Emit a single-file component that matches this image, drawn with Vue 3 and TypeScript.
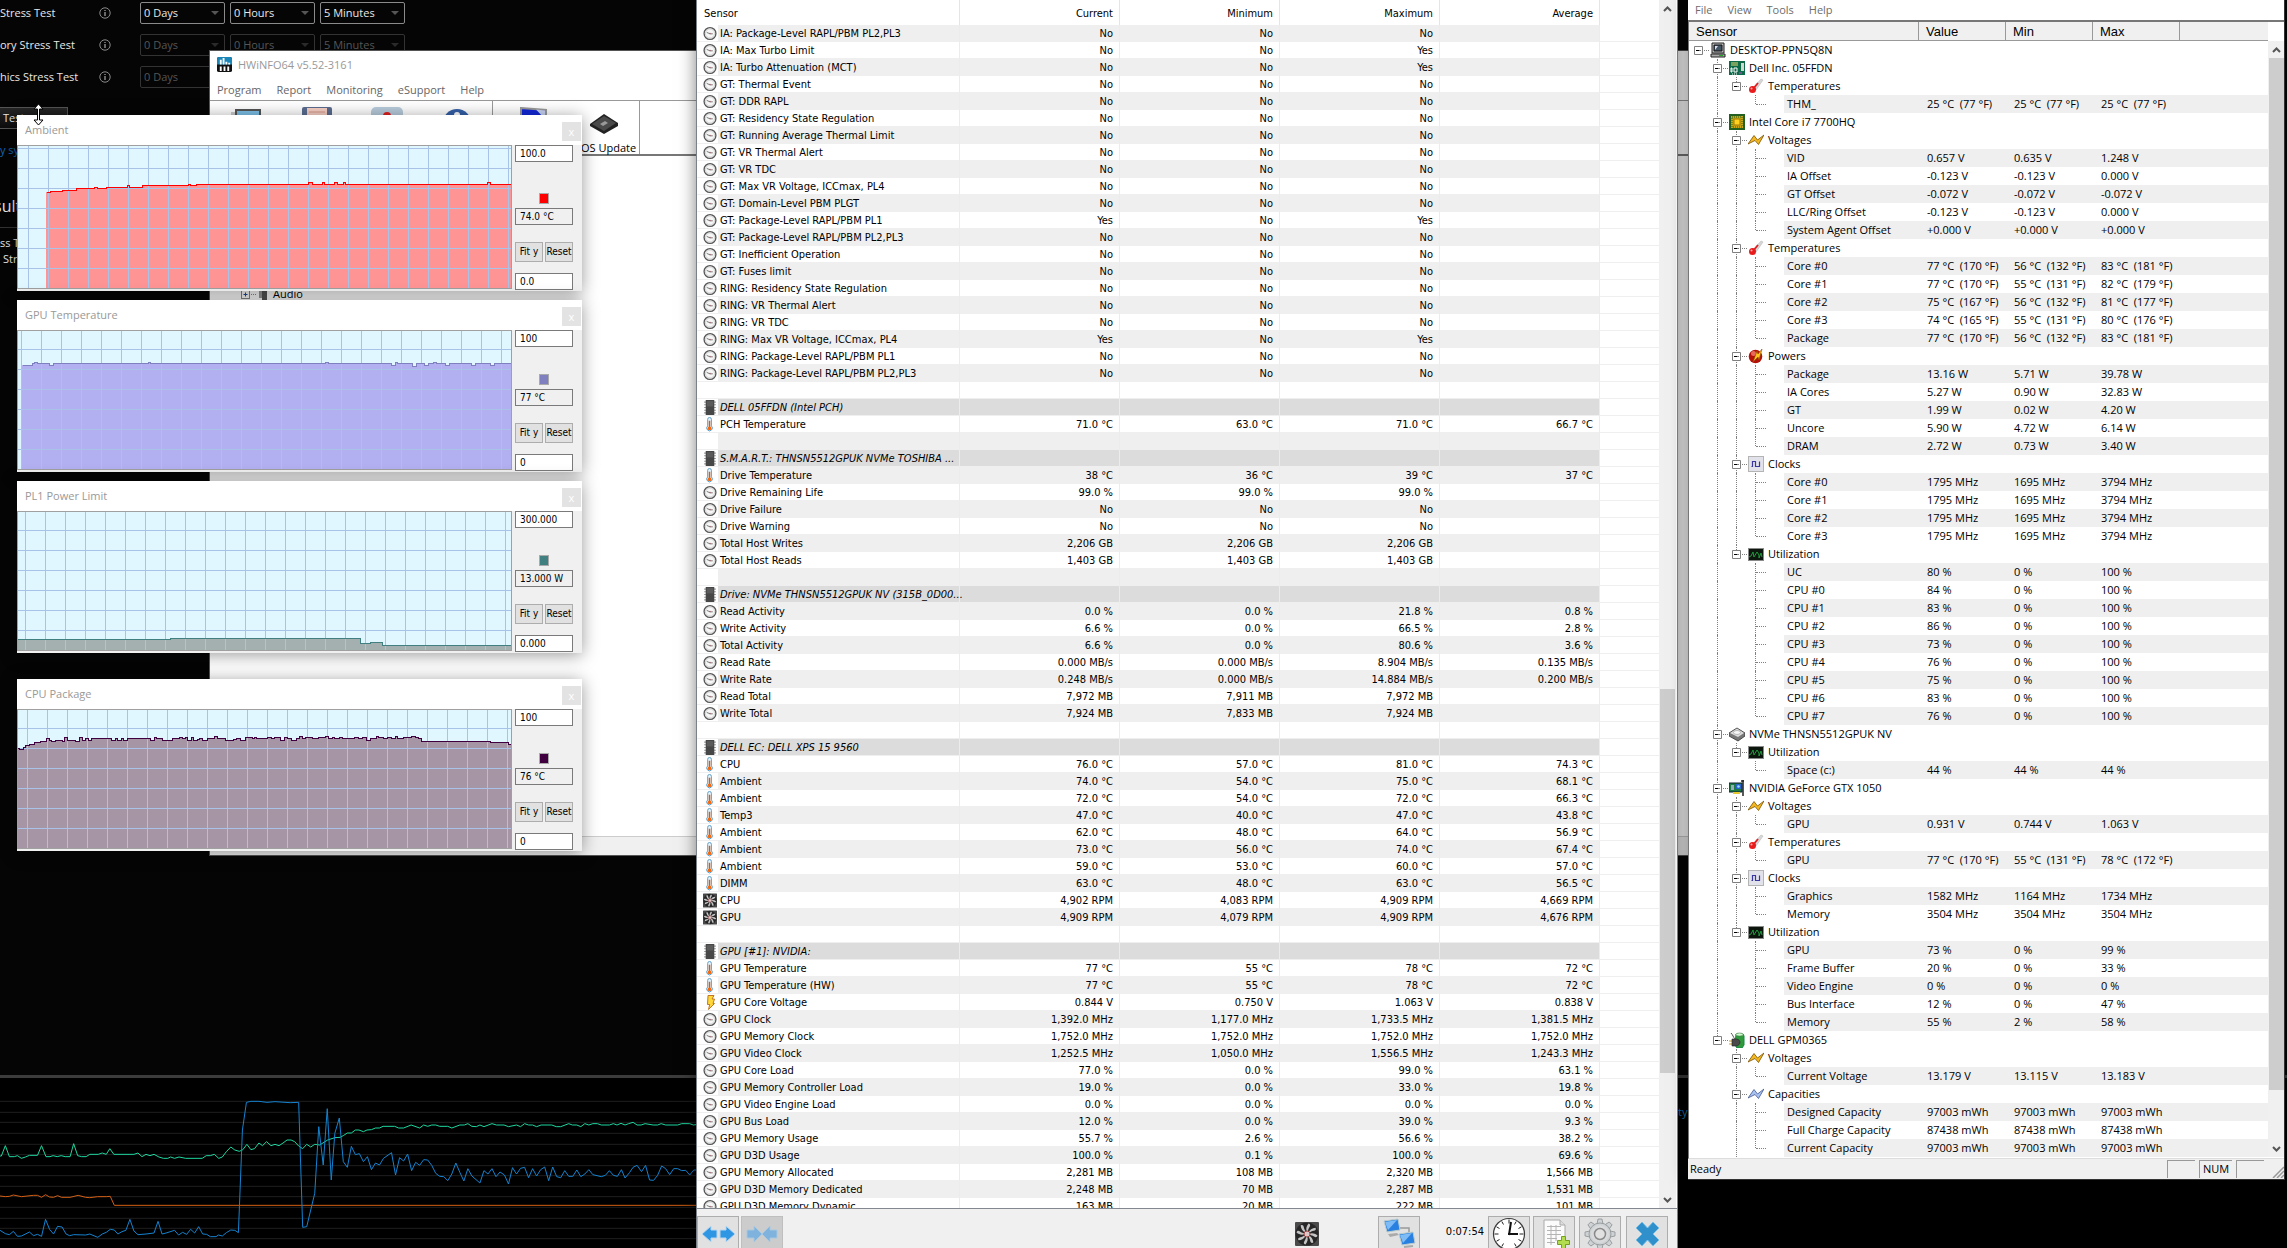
<script setup lang="ts">
type Cells = [string, string, string, string]
interface SensorRow { kind: string; name: string; cells: Cells }

const s = (kind: string, name: string, a = '', b = '', c = '', d = ''): SensorRow => ({ kind, name, cells: [a, b, c, d] })
const blank = (): SensorRow => s('blank', '')

const sensorRows: SensorRow[] = [
  s('clock', 'IA: Package-Level RAPL/PBM PL2,PL3', 'No', 'No', 'No'),
  s('clock', 'IA: Max Turbo Limit', 'No', 'No', 'Yes'),
  s('clock', 'IA: Turbo Attenuation (MCT)', 'No', 'No', 'Yes'),
  s('clock', 'GT: Thermal Event', 'No', 'No', 'No'),
  s('clock', 'GT: DDR RAPL', 'No', 'No', 'No'),
  s('clock', 'GT: Residency State Regulation', 'No', 'No', 'No'),
  s('clock', 'GT: Running Average Thermal Limit', 'No', 'No', 'No'),
  s('clock', 'GT: VR Thermal Alert', 'No', 'No', 'No'),
  s('clock', 'GT: VR TDC', 'No', 'No', 'No'),
  s('clock', 'GT: Max VR Voltage, ICCmax, PL4', 'No', 'No', 'No'),
  s('clock', 'GT: Domain-Level PBM PLGT', 'No', 'No', 'No'),
  s('clock', 'GT: Package-Level RAPL/PBM PL1', 'Yes', 'No', 'Yes'),
  s('clock', 'GT: Package-Level RAPL/PBM PL2,PL3', 'No', 'No', 'No'),
  s('clock', 'GT: Inefficient Operation', 'No', 'No', 'No'),
  s('clock', 'GT: Fuses limit', 'No', 'No', 'No'),
  s('clock', 'RING: Residency State Regulation', 'No', 'No', 'No'),
  s('clock', 'RING: VR Thermal Alert', 'No', 'No', 'No'),
  s('clock', 'RING: VR TDC', 'No', 'No', 'No'),
  s('clock', 'RING: Max VR Voltage, ICCmax, PL4', 'Yes', 'No', 'Yes'),
  s('clock', 'RING: Package-Level RAPL/PBM PL1', 'No', 'No', 'No'),
  s('clock', 'RING: Package-Level RAPL/PBM PL2,PL3', 'No', 'No', 'No'),
  blank(),
  s('chip', 'DELL 05FFDN (Intel PCH)'),
  s('therm', 'PCH Temperature', '71.0 °C', '63.0 °C', '71.0 °C', '66.7 °C'),
  blank(),
  s('chip', 'S.M.A.R.T.: THNSN5512GPUK NVMe TOSHIBA ...'),
  s('therm', 'Drive Temperature', '38 °C', '36 °C', '39 °C', '37 °C'),
  s('clock', 'Drive Remaining Life', '99.0 %', '99.0 %', '99.0 %'),
  s('clock', 'Drive Failure', 'No', 'No', 'No'),
  s('clock', 'Drive Warning', 'No', 'No', 'No'),
  s('clock', 'Total Host Writes', '2,206 GB', '2,206 GB', '2,206 GB'),
  s('clock', 'Total Host Reads', '1,403 GB', '1,403 GB', '1,403 GB'),
  blank(),
  s('chip', 'Drive: NVMe THNSN5512GPUK NV (315B_0D00...'),
  s('clock', 'Read Activity', '0.0 %', '0.0 %', '21.8 %', '0.8 %'),
  s('clock', 'Write Activity', '6.6 %', '0.0 %', '66.5 %', '2.8 %'),
  s('clock', 'Total Activity', '6.6 %', '0.0 %', '80.6 %', '3.6 %'),
  s('clock', 'Read Rate', '0.000 MB/s', '0.000 MB/s', '8.904 MB/s', '0.135 MB/s'),
  s('clock', 'Write Rate', '0.248 MB/s', '0.000 MB/s', '14.884 MB/s', '0.200 MB/s'),
  s('clock', 'Read Total', '7,972 MB', '7,911 MB', '7,972 MB'),
  s('clock', 'Write Total', '7,924 MB', '7,833 MB', '7,924 MB'),
  blank(),
  s('chip', 'DELL EC: DELL XPS 15 9560'),
  s('therm', 'CPU', '76.0 °C', '57.0 °C', '81.0 °C', '74.3 °C'),
  s('therm', 'Ambient', '74.0 °C', '54.0 °C', '75.0 °C', '68.1 °C'),
  s('therm', 'Ambient', '72.0 °C', '54.0 °C', '72.0 °C', '66.3 °C'),
  s('therm', 'Temp3', '47.0 °C', '40.0 °C', '47.0 °C', '43.8 °C'),
  s('therm', 'Ambient', '62.0 °C', '48.0 °C', '64.0 °C', '56.9 °C'),
  s('therm', 'Ambient', '73.0 °C', '56.0 °C', '74.0 °C', '67.4 °C'),
  s('therm', 'Ambient', '59.0 °C', '53.0 °C', '60.0 °C', '57.0 °C'),
  s('therm', 'DIMM', '63.0 °C', '48.0 °C', '63.0 °C', '56.5 °C'),
  s('fan', 'CPU', '4,902 RPM', '4,083 RPM', '4,909 RPM', '4,669 RPM'),
  s('fan', 'GPU', '4,909 RPM', '4,079 RPM', '4,909 RPM', '4,676 RPM'),
  blank(),
  s('chip', 'GPU [#1]: NVIDIA:'),
  s('therm', 'GPU Temperature', '77 °C', '55 °C', '78 °C', '72 °C'),
  s('therm', 'GPU Temperature (HW)', '77 °C', '55 °C', '78 °C', '72 °C'),
  s('bolt', 'GPU Core Voltage', '0.844 V', '0.750 V', '1.063 V', '0.838 V'),
  s('clock', 'GPU Clock', '1,392.0 MHz', '1,177.0 MHz', '1,733.5 MHz', '1,381.5 MHz'),
  s('clock', 'GPU Memory Clock', '1,752.0 MHz', '1,752.0 MHz', '1,752.0 MHz', '1,752.0 MHz'),
  s('clock', 'GPU Video Clock', '1,252.5 MHz', '1,050.0 MHz', '1,556.5 MHz', '1,243.3 MHz'),
  s('clock', 'GPU Core Load', '77.0 %', '0.0 %', '99.0 %', '63.1 %'),
  s('clock', 'GPU Memory Controller Load', '19.0 %', '0.0 %', '33.0 %', '19.8 %'),
  s('clock', 'GPU Video Engine Load', '0.0 %', '0.0 %', '0.0 %', '0.0 %'),
  s('clock', 'GPU Bus Load', '12.0 %', '0.0 %', '39.0 %', '9.3 %'),
  s('clock', 'GPU Memory Usage', '55.7 %', '2.6 %', '56.6 %', '38.2 %'),
  s('clock', 'GPU D3D Usage', '100.0 %', '0.1 %', '100.0 %', '69.6 %'),
  s('clock', 'GPU Memory Allocated', '2,281 MB', '108 MB', '2,320 MB', '1,566 MB'),
  s('clock', 'GPU D3D Memory Dedicated', '2,248 MB', '70 MB', '2,287 MB', '1,531 MB'),
  s('clock', 'GPU D3D Memory Dynamic', '163 MB', '20 MB', '222 MB', '101 MB'),
]

type Leaf = [string, string, string, string]
interface Section { name: string; icon: string; leaves: Leaf[] }
interface Device { name: string; icon: string; open?: boolean; sections: Section[] }

const devices: Device[] = [
  { name: 'Dell Inc. 05FFDN', icon: 'board', sections: [
    { name: 'Temperatures', icon: 'temps', leaves: [['THM_', '25 °C  (77 °F)', '25 °C  (77 °F)', '25 °C  (77 °F)']] },
  ] },
  { name: 'Intel Core i7 7700HQ', icon: 'cpu', sections: [
    { name: 'Voltages', icon: 'volts', leaves: [
      ['VID', '0.657 V', '0.635 V', '1.248 V'],
      ['IA Offset', '-0.123 V', '-0.123 V', '0.000 V'],
      ['GT Offset', '-0.072 V', '-0.072 V', '-0.072 V'],
      ['LLC/Ring Offset', '-0.123 V', '-0.123 V', '0.000 V'],
      ['System Agent Offset', '+0.000 V', '+0.000 V', '+0.000 V'],
    ] },
    { name: 'Temperatures', icon: 'temps', leaves: [
      ['Core #0', '77 °C  (170 °F)', '56 °C  (132 °F)', '83 °C  (181 °F)'],
      ['Core #1', '77 °C  (170 °F)', '55 °C  (131 °F)', '82 °C  (179 °F)'],
      ['Core #2', '75 °C  (167 °F)', '56 °C  (132 °F)', '81 °C  (177 °F)'],
      ['Core #3', '74 °C  (165 °F)', '55 °C  (131 °F)', '80 °C  (176 °F)'],
      ['Package', '77 °C  (170 °F)', '56 °C  (132 °F)', '83 °C  (181 °F)'],
    ] },
    { name: 'Powers', icon: 'power', leaves: [
      ['Package', '13.16 W', '5.71 W', '39.78 W'],
      ['IA Cores', '5.27 W', '0.90 W', '32.83 W'],
      ['GT', '1.99 W', '0.02 W', '4.20 W'],
      ['Uncore', '5.90 W', '4.72 W', '6.14 W'],
      ['DRAM', '2.72 W', '0.73 W', '3.40 W'],
    ] },
    { name: 'Clocks', icon: 'wave', leaves: [
      ['Core #0', '1795 MHz', '1695 MHz', '3794 MHz'],
      ['Core #1', '1795 MHz', '1695 MHz', '3794 MHz'],
      ['Core #2', '1795 MHz', '1695 MHz', '3794 MHz'],
      ['Core #3', '1795 MHz', '1695 MHz', '3794 MHz'],
    ] },
    { name: 'Utilization', icon: 'util', leaves: [
      ['UC', '80 %', '0 %', '100 %'],
      ['CPU #0', '84 %', '0 %', '100 %'],
      ['CPU #1', '83 %', '0 %', '100 %'],
      ['CPU #2', '86 %', '0 %', '100 %'],
      ['CPU #3', '73 %', '0 %', '100 %'],
      ['CPU #4', '76 %', '0 %', '100 %'],
      ['CPU #5', '75 %', '0 %', '100 %'],
      ['CPU #6', '83 %', '0 %', '100 %'],
      ['CPU #7', '76 %', '0 %', '100 %'],
    ] },
  ] },
  { name: 'NVMe THNSN5512GPUK NV', icon: 'disk', sections: [
    { name: 'Utilization', icon: 'util', leaves: [['Space (c:)', '44 %', '44 %', '44 %']] },
  ] },
  { name: 'NVIDIA GeForce GTX 1050', icon: 'card', sections: [
    { name: 'Voltages', icon: 'volts', leaves: [['GPU', '0.931 V', '0.744 V', '1.063 V']] },
    { name: 'Temperatures', icon: 'temps', leaves: [['GPU', '77 °C  (170 °F)', '55 °C  (131 °F)', '78 °C  (172 °F)']] },
    { name: 'Clocks', icon: 'wave', leaves: [
      ['Graphics', '1582 MHz', '1164 MHz', '1734 MHz'],
      ['Memory', '3504 MHz', '3504 MHz', '3504 MHz'],
    ] },
    { name: 'Utilization', icon: 'util', leaves: [
      ['GPU', '73 %', '0 %', '99 %'],
      ['Frame Buffer', '20 %', '0 %', '33 %'],
      ['Video Engine', '0 %', '0 %', '0 %'],
      ['Bus Interface', '12 %', '0 %', '47 %'],
      ['Memory', '55 %', '2 %', '58 %'],
    ] },
  ] },
  { name: 'DELL GPM0365', icon: 'battery', open: true, sections: [
    { name: 'Voltages', icon: 'volts', leaves: [['Current Voltage', '13.179 V', '13.115 V', '13.183 V']] },
    { name: 'Capacities', icon: 'caps', leaves: [
      ['Designed Capacity', '97003 mWh', '97003 mWh', '97003 mWh'],
      ['Full Charge Capacity', '87438 mWh', '87438 mWh', '87438 mWh'],
      ['Current Capacity', '97003 mWh', '97003 mWh', '97003 mWh'],
    ] },
  ] },
]

// Each guide is one 19px slot in front of a tree label.
interface TreeRow { guides: string[]; icon: string; name: string; values: string[]; band: boolean }
const treeRows: TreeRow[] = [{ guides: ['box'], icon: 'pc', name: 'DESKTOP-PPN5Q8N', values: ['', '', ''], band: false }]
devices.forEach((d, di) => {
  const lastD = di === devices.length - 1
  treeRows.push({ guides: ['', lastD ? 'box up' : 'box up down'], icon: d.icon, name: d.name, values: ['', '', ''], band: false })
  d.sections.forEach((sec, si) => {
    const lastS = si === d.sections.length - 1 && !d.open
    const g1 = lastD ? '' : 'up down'
    treeRows.push({ guides: ['', g1, lastS ? 'box up' : 'box up down'], icon: sec.icon, name: sec.name, values: ['', '', ''], band: false })
    sec.leaves.forEach((l, li) => {
      const lastL = li === sec.leaves.length - 1
      treeRows.push({
        guides: ['', g1, lastS ? '' : 'up down', lastL ? 'arm up' : 'arm up down', ''],
        icon: '', name: l[0], values: [l[1], l[2], l[3]], band: li % 2 === 0,
      })
    })
  })
})

interface Graph {
  id: string; title: string; top: string; bottom: string; value: string
  height: number; gx: number; gy: number; line: string; fill: string; steps: [number, number][]
}
const graphs: Graph[] = [
  { id: 'ambient', title: 'Ambient', top: '100.0', bottom: '0.0', value: '74.0 °C', height: 144, gx: 11, gy: 3, line: '#ff0000', fill: '#ff9494',
    steps: [[29, 47], [33, 46], [45, 45], [59, 43], [77, 42], [80, 43], [89, 42], [110, 40], [112, 42], [125, 40], [171, 39], [173, 40], [179, 39], [291, 37], [295, 39], [305, 37], [307, 39], [317, 37], [320, 39], [326, 37], [328, 39], [470, 37], [473, 39]] },
  { id: 'gputemp', title: 'GPU Temperature', top: '100', bottom: '0', value: '77 °C', height: 140, gx: 4, gy: 19, line: '#8080c0', fill: '#b2b0f0',
    steps: [[5, 35], [15, 33], [17, 32], [20, 33], [32, 35], [36, 33], [131, 32], [133, 33], [308, 32], [311, 33], [374, 35], [378, 32], [380, 33], [395, 36], [399, 33], [407, 35], [411, 33], [416, 32], [419, 33], [428, 35], [432, 33], [454, 35], [458, 33], [473, 35], [477, 33]] },
  { id: 'pl1', title: 'PL1 Power Limit', top: '300.000', bottom: '0.000', value: '13.000 W', height: 140, gx: 8, gy: 19, line: '#408080', fill: '#a3b0af',
    steps: [[0, 128], [153, 127], [343, 132], [353, 131], [365, 134]] },
  { id: 'package', title: 'CPU Package', top: '100', bottom: '0', value: '76 °C', height: 140, gx: 10, gy: 19, line: '#400040', fill: '#a595a5',
    steps: [[0, 39], [2, 40], [6, 38], [8, 36], [12, 35], [17, 33], [23, 32], [29, 29], [32, 31], [34, 32], [38, 31], [45, 32], [47, 28], [50, 31], [58, 32], [62, 28], [65, 31], [68, 29], [71, 31], [74, 29], [94, 31], [98, 29], [100, 31], [104, 29], [106, 31], [110, 29], [133, 31], [137, 28], [139, 29], [145, 31], [155, 29], [162, 28], [165, 29], [168, 28], [170, 31], [174, 28], [176, 31], [180, 30], [182, 29], [185, 31], [190, 29], [197, 27], [200, 29], [208, 31], [216, 30], [219, 29], [223, 31], [228, 28], [235, 29], [237, 28], [239, 29], [250, 28], [254, 29], [257, 28], [263, 31], [267, 28], [270, 29], [274, 31], [279, 29], [282, 27], [285, 29], [288, 28], [295, 29], [301, 28], [308, 27], [311, 29], [315, 28], [317, 29], [322, 28], [325, 29], [337, 28], [341, 29], [345, 28], [349, 31], [353, 29], [359, 27], [361, 28], [366, 29], [370, 28], [374, 29], [378, 27], [380, 29], [386, 28], [394, 27], [398, 28], [401, 29], [404, 32], [473, 33], [491, 35]] },
]
const stepPath = (g: Graph) => {
  let d = `M${g.steps[0][0]} ${g.steps[0][1]}`
  for (let i = 1; i < g.steps.length; i++) d += `H${g.steps[i][0]}V${g.steps[i][1]}`
  return d + 'H495'
}
const areaPath = (g: Graph) => `${stepPath(g)}V${g.height}H${g.steps[0][0]}Z`
const ticks = (start: number, end: number) => {
  const out: number[] = []
  for (let v = start; v < end; v += 20) out.push(v)
  return out
}

const chartLines = [154, 187, 217, 250, 283, 314, 347, 377, 409, 440, 472, 505, 535, 566]
const greenLine = '0,318 3,318 12,287 21,320 32,320 39,317 48,325 57,321 66,316 84,316 93,287 103,320 112,320 119,317 128,320 137,317 146,320 157,320 165,281 174,317 183,320 193,320 201,313 220,313 229,309 238,313 246,296 255,313 300,313 309,309 318,320 327,313 336,317 345,313 356,321 366,325 376,325 382,321 391,325 401,321 416,325 453,325 462,317 471,317 480,313 490,325 498,321 507,305 517,291 526,300 536,304 544,299 553,283 562,299 570,296 580,279 588,287 597,275 607,287 616,283 625,287 634,279 643,270 652,270 660,275 669,288 678,296 687,283 696,291 705,283 716,285 734,270 750,263 762,262 770,256 778,249 787,249 796,240 804,240 814,245 822,240 832,239 841,234 850,234 858,229 884,229 893,234 904,234 921,225 940,234 949,225 958,229 967,225 976,225 985,229 1003,229 1012,234 1030,225 1040,225 1048,221 1057,229 1067,230 1075,225 1084,230 1102,221 1112,225 1129,225 1139,230 1157,225 1166,230 1175,221 1184,225 1193,225 1202,230 1212,225 1236,225 1246,230 1256,230 1274,221 1282,225 1292,225 1301,230 1310,221 1319,225 1328,221 1338,221 1347,225 1365,225 1374,221 1382,225 1391,220 1400,225 1408,221 1418,217 1427,225 1436,225 1445,221 1463,225 1473,225 1481,221 1491,225 1518,225 1527,221 1545,221 1553,225 1559,224'
const blueLine = '0,541 12,551 21,554 30,544 39,559 48,558 66,546 75,557 84,553 93,559 102,508 111,538 120,552 129,529 139,531 148,552 156,557 165,554 192,555 201,552 219,562 229,552 238,547 247,538 256,540 264,552 273,545 282,541 291,508 300,543 309,554 327,552 345,549 354,514 363,552 372,549 391,541 400,555 409,547 418,553 427,538 436,549 445,530 454,552 463,553 471,560 484,560 489,555 498,558 507,548 517,540 526,541 534,548 543,240 552,157 562,154 580,154 598,157 616,155 650,158 669,157 678,532 687,530 705,430 714,230 724,345 733,176 742,390 750,250 760,204 769,335 778,352 787,289 796,314 805,311 814,335 823,320 832,359 841,339 850,345 859,325 877,308 886,375 895,323 904,333 913,312 922,362 931,337 940,346 949,329 958,330 967,346 976,370 985,379 994,380 1003,392 1012,372 1021,339 1030,367 1039,393 1048,356 1057,378 1075,399 1084,362 1093,372 1102,356 1111,380 1120,366 1130,375 1139,402 1148,353 1157,372 1166,355 1175,352 1184,383 1193,356 1202,378 1211,359 1220,351 1229,392 1238,351 1247,380 1256,383 1265,362 1274,379 1283,379 1292,360 1301,380 1310,372 1319,359 1328,374 1347,380 1356,376 1365,362 1374,376 1383,379 1392,359 1400,384 1410,368 1418,352 1427,346 1437,365 1446,346 1455,390 1464,391 1473,376 1482,348 1491,356 1500,374 1509,356 1518,356 1527,362 1536,361 1545,375 1554,360 1559,360'
const orangeLine = '0,438 12,440 21,439 30,435 48,440 75,436 84,436 93,442 102,434 111,441 120,442 129,437 138,442 157,442 175,436 192,442 201,443 219,440 238,440 247,439 256,466 1559,466'

const durations = ['0 Days', '0 Hours', '5 Minutes']
const tests = [
  { label: 'Stress Test', off: false },
  { label: 'ory Stress Test', off: true },
  { label: 'hics Stress Test', off: true },
]
const blades = [0, 45, 90, 135, 180, 225, 270, 315]
</script>

<template>
  <svg class="defs" aria-hidden="true">
    <symbol id="i-clock" viewBox="0 0 13 13"><circle cx="6.5" cy="6.5" r="5.5" fill="#f7f7f7" stroke="#555" stroke-width="1.2" /><circle cx="6.5" cy="6.5" r="4.2" fill="none" stroke="#ccc" stroke-width=".8" /><path d="M3.5 5.500l3 1.300h2.600" stroke="#666" stroke-width=".8" fill="none" /><circle cx="6.5" cy="6.6" r=".7" fill="#a66" /></symbol>
    <symbol id="i-therm" viewBox="0 0 13 16"><path d="M4 2.5a2 2 0 014 0v7a3 3 0 11-4 0z" fill="#e6f3fb" stroke="#5a9bc4" /><path d="M6 4v7" stroke="#d85a10" stroke-width="1.6" /><circle cx="6" cy="12" r="2" fill="#f26a12" /></symbol>
    <symbol id="i-chip" viewBox="0 0 13 14"><path d="M1 2h11M1 4.5h11M1 7h11M1 9.500h11M1 12h11" stroke="#999" /><rect x="2.500" y="0" width="8" height="14" fill="#474747" /><path d="M3.500 1h6v5h-6z" fill="#5b5b5b" /></symbol>
    <symbol id="i-fan" viewBox="0 0 24 24"><rect width="24" height="24" rx="1" fill="#4a4a4a" /><circle cx="12" cy="12" r="11.500" fill="#262626" /><path v-for="b in blades" :key="b" d="M12 10C10.500 7 11.500 4 13.500 1.500c2 .5 2 2 1 3.500C13.500 6.500 13 8 13 10z" fill="#c4c4c4" :transform="`rotate(${b} 12 12)`" /><circle cx="12" cy="12" r="3" fill="#dcc8c8" stroke="#944" /></symbol>
    <symbol id="i-bolt" viewBox="0 0 13 15"><path d="M4.500.500h6L8.500 4H11L9.500 8.500h1.500L5 14.500l1.200-5H4z" fill="#ffd83a" stroke="#b86a1a" stroke-width=".9" /></symbol>

    <symbol id="i-pc" viewBox="0 0 16 16"><path d="M2 1h12v10H2z" fill="#bbb" stroke="#222" /><path d="M4 3h8v6H4z" fill="#456" stroke="#111" /><path d="M5 4l3 0-3 4z" fill="#dde" /><path d="M1 12h14v3H1z" fill="#aaa" stroke="#222" /><path d="M9 13.500h4" stroke="#2a2" /></symbol>
    <symbol id="i-board" viewBox="0 0 16 16"><rect y="1" width="16" height="14" fill="#0d6b4a" /><path d="M2 3h7M2 5h7" stroke="#e8d870" /><path d="M2 8h1v4H2zM5 8h3v4H5z" fill="none" stroke="#fff" /><path d="M12 3h3v8h-3z" fill="#cfd8d0" /><path d="M3 14h6" stroke="#fff" stroke-dasharray="1 1" /><path d="M10 13h3" stroke="#c4c" /></symbol>
    <symbol id="i-cpu" viewBox="0 0 16 16"><rect x="1" y="1" width="14" height="14" fill="#cda70f" stroke="#24601f" stroke-width="2" /><rect x="3" y="3" width="10" height="10" fill="none" stroke="#24601f" stroke-dasharray="1 1" /><rect x="5" y="5" width="6" height="6" fill="#ffd21e" stroke="#a07808" /></symbol>
    <symbol id="i-disk" viewBox="0 0 16 16"><path d="M0 7l8-5 8 5v3l-7 5-9-5z" fill="#777" stroke="#333" stroke-width=".8" /><path d="M1 7l7-4.500L15 7l-6 4z" fill="#ddd" /><ellipse cx="8" cy="6.500" rx="3.500" ry="2" fill="#f6f6f6" stroke="#999" stroke-width=".6" /></symbol>
    <symbol id="i-card" viewBox="0 0 16 16"><path d="M14 0v16M12 1h3" stroke="#222" stroke-width="1.500" /><path d="M0 3h13v9H0z" fill="#1c7a44" stroke="#123" /><path d="M2 5h3v5H2z" fill="#9ab" /><rect x="7" y="4" width="5" height="5" fill="#2a62c8" /><circle cx="9.500" cy="6.500" r="1.300" fill="#9df" /><path d="M4 13h7" stroke="#e8c830" stroke-width="2" /></symbol>
    <symbol id="i-battery" viewBox="0 0 16 16"><path d="M7 2h7l1 2v9l-2 3H8l-2-3z" fill="#2e9a3c" stroke="#184" /><ellipse cx="10.500" cy="2.500" rx="3.500" ry="1.500" fill="#cfc" stroke="#575" stroke-width=".6" /><path d="M0 9h4M0 12h4" stroke="#c9a020" stroke-width="1.200" /><path d="M3 7h4c3 0 4 2 4 3.500S9 14 7 14H3z" fill="#4a4a4a" stroke="#222" stroke-width=".6" /><path d="M2 1c2 2 2 4 4 6" stroke="#555" fill="none" /></symbol>
    <symbol id="i-temps" viewBox="0 0 16 16"><path d="M5 10l8-9 2 1-7 10z" fill="#d8d8d8" stroke="#bbb" stroke-width=".6" /><path d="M5 11l5-6" stroke="#e02020" stroke-width="1.800" /><circle cx="4.500" cy="11.500" r="3.500" fill="#e81c1c" /><circle cx="3.500" cy="10.500" r="1" fill="#ffb0b0" /></symbol>
    <symbol id="i-volts" viewBox="0 0 16 16"><path d="M0 12L6 3.500l3.500 4.500L16 3l-5.500 9.500-3.500-4z" fill="#f4b820" stroke="#7a5200" stroke-width=".8" /></symbol>
    <symbol id="i-caps" viewBox="0 0 16 16"><path d="M0 12L6 3.500l3.500 4.500L16 3l-5.500 9.500-3.500-4z" fill="#a9c2f4" stroke="#44588c" stroke-width=".8" /></symbol>
    <symbol id="i-power" viewBox="0 0 16 16"><circle cx="7.500" cy="8.500" r="6.800" fill="#b41208" /><circle cx="5.500" cy="5.500" r="2.500" fill="#e86a5a" /><path d="M5 14l4-11 1 3 4-5-3 11-1-3z" fill="#ffc21e" stroke="#8a4a00" stroke-width=".6" /></symbol>
    <symbol id="i-wave" viewBox="0 0 16 16"><rect x=".5" y=".5" width="15" height="15" fill="#e2e2ea" stroke="#b4b4b4" /><path d="M3.500 10.500h1v-5h3v5h4v-5" fill="none" stroke="#3838a0" stroke-width="1.200" /></symbol>
    <symbol id="i-util" viewBox="0 0 16 16"><rect x=".5" y="2.500" width="15" height="12" fill="#0c160c" stroke="#8a8a8a" /><path d="M1 11l2-1 2-4 1 5 3-5 2 3v3l2-5 1 4" fill="none" stroke="#1e9c3c" /></symbol>
  </svg>

  <div class="desktop">
    <main class="stress">
      <div class="stress-form">
        <div v-for="(t, i) in tests" :key="i" class="test-row" :class="{ off: t.off }">
          <span class="test-name">{{ t.label }}</span>
          <svg class="info" viewBox="0 0 12 12"><circle cx="6" cy="6" r="5.200" fill="none" stroke="#8a8a8a" /><path d="M6 5v4M6 3v1" stroke="#aaa" stroke-width="1.200" /></svg>
          <span v-for="d in durations" :key="d" class="combo">
            <select :aria-label="d" :disabled="t.off"><option>{{ d }}</option></select>
            <svg class="arrow" viewBox="0 0 8 4"><path d="M0 0h8L4 4z" fill="currentColor" /></svg>
          </span>
        </div>
        <button class="start" type="button">Test</button>
        <a class="verify" href="#verify">y sy</a>
        <h2>sult</h2>
        <p>ss T</p>
        <p class="inset">Str</p>
      </div>
      <section class="chart">
        <svg viewBox="0 84 1559 510" preserveAspectRatio="none">
          <line v-for="y in chartLines" :key="y" x1="0" x2="1559" :y1="y" :y2="y" stroke="#1f1f1f" />
          <polyline :points="orangeLine" stroke="#d25f14" />
          <polyline :points="greenLine" stroke="#1fd6a0" />
          <polyline :points="blueLine" stroke="#1583d0" />
        </svg>
        <a class="more" href="#activity">ty</a>
      </section>
    </main>

    <section class="window hwinfo">
      <header class="hw-title">
        <svg viewBox="0 0 16 16"><rect width="16" height="16" rx="2" fill="#111" /><path d="M0 2a2 2 0 012-2h12a2 2 0 012 2v6H0z" fill="#1a86b8" /><path d="M4 3v5M7 1v7M10 5v3M13 6v2M4 10v5M8 10v5M12 10v5" stroke="#fff" stroke-width="2" /></svg>
        HWiNFO64 v5.52-3161
      </header>
      <nav class="hw-menu"><span>Program</span><span>Report</span><span>Monitoring</span><span>eSupport</span><span>Help</span></nav>
      <div class="hw-tools">
        <svg class="tool" viewBox="0 0 32 32"><path d="M0 5h4v20H0z" fill="#ccc" /><rect x="5" y="3" width="24" height="22" fill="#7cc0e8" stroke="#555" stroke-width="2" /></svg>
        <svg class="tool" viewBox="0 0 32 32"><rect x="1" width="30" height="30" rx="2" fill="#5a6c90" /><rect x="6" y="1" width="20" height="28" fill="#f8d0c4" /><path d="M8 5h16M8 9h16" stroke="#d89a8c" /></svg>
        <svg class="tool" viewBox="0 0 32 32"><rect width="32" height="32" rx="5" fill="#b8ccdc" /><circle cx="16" cy="9" r="4" fill="#e02020" /></svg>
        <svg class="tool" viewBox="0 0 32 32"><circle cx="16" cy="16" r="14" fill="#3560a8" /><circle cx="16" cy="8" r="3" fill="#fff" /></svg>
        <i class="bar"></i>
        <svg class="tool wide" viewBox="0 0 32 32"><path d="M3 1l25 2v20l-25-2z" fill="#1228d8" stroke="#999" stroke-width="2" /><path d="M18 2.500l9 1V12z" fill="#c8d4f4" /></svg>
        <button type="button" class="bios">
          <svg viewBox="0 0 28 20"><path d="M0 10L14 0l14 9v3L14 20 0 12z" fill="#222" /><path d="M2 10l12-8 12 7-12 8z" fill="#4a4a4a" /><path d="M10 10l5-3 3 2-5 3z" fill="#999" /></svg>
          BIOS Update
        </button>
        <i class="bar"></i>
      </div>
      <div class="hw-body">
        <div class="hw-node">
          <svg viewBox="0 0 28 12"><rect x=".5" y="2.500" width="8" height="8" fill="#fff" stroke="#888" /><path d="M2.500 6.500h4M4.500 4.500v4" stroke="#234a9a" /><path d="M10 6.500h6" stroke="#888" stroke-dasharray="1 1" /><path d="M18 3h3v7h-3z" fill="#999" /><path d="M21 1h5v11h-5z" fill="#555" /></svg>
          Audio
        </div>
      </div>
      <footer class="hw-status">HWiNFO64</footer>
    </section>

    <section v-for="g in graphs" :key="g.id" class="window graph" :class="g.id">
      <header><span>{{ g.title }}</span><button type="button" aria-label="Close">x</button></header>
      <div class="graph-body">
        <svg class="plot" :style="{ height: g.height + 'px' }" :viewBox="`0 0 495 ${g.height}`" shape-rendering="crispEdges">
          <rect width="495" :height="g.height" fill="#e0f7ff" />
          <path :d="areaPath(g)" :fill="g.fill" />
          <g fill="#a9c3e8">
            <rect v-for="x in ticks(g.gx, 495)" :key="'x' + x" :x="x" y="0" width="1" :height="g.height" />
            <rect v-for="y in ticks(g.gy, g.height)" :key="'y' + y" x="0" :y="y" width="495" height="1" />
          </g>
          <path :d="stepPath(g)" fill="none" :stroke="g.line" transform="translate(0.5 0.5)" />
          <rect x=".5" y=".5" width="494" :height="g.height - 1" fill="none" stroke="#a0a0a0" />
        </svg>
        <div class="side">
          <input type="text" :value="g.top" :aria-label="g.title + ' upper limit'">
          <span class="swatch" :style="{ background: g.line }"></span>
          <input type="text" class="now" :value="g.value" :aria-label="g.title + ' current'" readonly>
          <div class="pair"><button type="button">Fit y</button><button type="button">Reset</button></div>
          <input type="text" :value="g.bottom" :aria-label="g.title + ' lower limit'">
        </div>
      </div>
    </section>

    <section class="window sensors">
      <div class="sensor-area">
        <table>
          <colgroup><col class="c-icon"><col class="c-name"><col class="c-val"><col class="c-val"><col class="c-val"><col class="c-val"><col></colgroup>
          <thead><tr><th colspan="2" class="first">Sensor</th><th>Current</th><th>Minimum</th><th>Maximum</th><th>Average</th><th class="rest"></th></tr></thead>
          <tbody>
            <tr v-for="(r, i) in sensorRows" :key="i" :class="{ band: i % 2 === 0, group: r.kind === 'chip' }">
              <td class="ico"><svg v-if="r.kind !== 'blank'"><use :href="'#i-' + r.kind" /></svg></td>
              <td class="name">{{ r.name }}</td>
              <td v-for="(c, j) in r.cells" :key="j">{{ c }}</td>
              <td class="rest"></td>
            </tr>
          </tbody>
        </table>
        <div class="scroll">
          <svg viewBox="0 0 9 6"><path d="M1 5l3.500-3.500L8 5" /></svg>
          <div class="track"><div class="thumb"></div></div>
          <svg viewBox="0 0 9 6"><path d="M1 1l3.500 3.500L8 1" /></svg>
        </div>
      </div>
      <footer class="sensor-bar">
        <button type="button" aria-label="Expand"><svg viewBox="0 0 40 30"><path d="M4 16l9-8v4h6v8h-6v4z" fill="#2f96e4" stroke="#b8d6ee" /><path d="M37 16l-9-8v4h-6v8h6v4z" fill="#2f96e4" stroke="#b8d6ee" /></svg></button>
        <button type="button" class="dim" aria-label="Shrink"><svg viewBox="0 0 40 30"><path d="M20 16l-8-8v4H5v8h7v4z" fill="#7fb2dc" stroke="#a8c8e0" /><path d="M20 16l8-8v4h7v8h-7v4z" fill="#7fb2dc" stroke="#a8c8e0" /></svg></button>
        <svg class="fan"><use href="#i-fan" /></svg>
        <button type="button" aria-label="Network"><svg viewBox="0 0 40 32"><path d="M20 11h10v8" fill="none" stroke="#999" stroke-width="1.500" /><path d="M5 4l14-2 2 11-13 2z" fill="#2a80e0" stroke="#bcc" /><path d="M6 5l12-2-9 10z" fill="#7fbcf6" /><path d="M9 17l9-1 2 2-9 2z" fill="#aaa" /><path d="M20 17l14-2 2 11-13 2z" fill="#2a80e0" stroke="#bcc" /><path d="M21 18l12-2-9 10z" fill="#7fbcf6" /><path d="M25 30l9-1" stroke="#aaa" stroke-width="2" /></svg></button>
        <time>0:07:54</time>
        <button type="button" aria-label="Clock"><svg viewBox="0 0 40 32"><circle cx="20" cy="17" r="15.500" fill="#fff" stroke="#3a3a3a" stroke-width="1.200" /><path d="M20 2.500v4M27.200 4.500l-1.700 3M32.500 9.800l-3 1.700M34.500 17h-4M32.500 24.200l-3-1.700M27.200 29.500l-1.700-3M12.800 4.500l1.700 3M7.500 9.800l3 1.700M5.500 17h4M7.500 24.200l3-1.700M12.800 29.500l1.700-3" stroke="#222" /><path d="M20 18l2-13M19 17h10" stroke="#111" stroke-width="2" fill="none" /></svg></button>
        <button type="button" class="g3" aria-label="Log"><svg viewBox="0 0 40 32"><path d="M10 3h16l5 5v24H10z" fill="#fbfbfb" stroke="#aaa" /><path d="M26 3v5h5" fill="#ddd" stroke="#aaa" /><path d="M13 9.500h14M13 13.500h14M13 17.500h14M13 21.500h10M13 25.500h8M17 8v20M22 8v16" stroke="#b4b4b4" /><path d="M27.500 19.500h4v4h4v4h-4v4h-4v-4h-4v-4h4z" fill="#b4dc50" stroke="#74a020" /></svg></button>
        <button type="button" class="g4" aria-label="Settings"><svg viewBox="0 0 40 32"><g fill="#cfd2d4" stroke="#8c9092" stroke-width=".8"><path v-for="b in blades" :key="b" d="M17 7l1-5h4l1 5z" :transform="`rotate(${b} 20 17)`" /><circle cx="20" cy="17" r="11" /></g><circle cx="20" cy="17" r="9" fill="#d8dadb" /><circle cx="20" cy="17" r="5.500" fill="#e1e1e1" stroke="#8a8a8a" stroke-width="1.500" /></svg></button>
        <button type="button" class="g5" aria-label="Close"><svg viewBox="0 0 40 32"><path d="M9 11l6-6 5.500 6L26 5l6 6-6 6 6 6-6 6-5.500-6L15 29l-6-6 6-6z" fill="#2f90cc" stroke="#7ec0e4" /></svg></button>
      </footer>
    </section>

    <section class="window monitor">
      <nav class="mon-menu"><span>File</span><span>View</span><span>Tools</span><span>Help</span></nav>
      <div class="mon-frame">
        <table>
          <colgroup><col class="m-name"><col class="m-val"><col class="m-val"><col class="m-val"><col></colgroup>
          <thead><tr><th>Sensor</th><th>Value</th><th>Min</th><th>Max</th><th></th></tr></thead>
          <tbody>
            <tr v-for="(r, i) in treeRows" :key="i" :class="{ band: r.band }">
              <td>
                <div class="node">
                  <i v-for="(g, j) in r.guides" :key="j" class="slot" :class="g"><svg v-if="g.startsWith('box')" viewBox="0 0 9 9"><path d="M.5.500h8v8h-8z" fill="#fff" stroke="#808080" /><path d="M2 4.500h5" stroke="#000" /></svg></i>
                  <svg v-if="r.icon" class="pic"><use :href="'#i-' + r.icon" /></svg>
                  <span class="label">{{ r.name }}</span>
                </div>
              </td>
              <td v-for="(v, j) in r.values" :key="j" class="val">{{ v }}</td>
              <td class="val"></td>
            </tr>
          </tbody>
        </table>
        <div class="scroll">
          <svg viewBox="0 0 9 6"><path d="M1 5l3.500-3.500L8 5" /></svg>
          <div class="track"><div class="thumb"></div></div>
          <svg viewBox="0 0 9 6"><path d="M1 1l3.500 3.500L8 1" /></svg>
        </div>
      </div>
      <footer class="mon-status"><span>Ready</span><i class="pane"></i><i class="pane num">NUM</i><i class="pane"></i><svg viewBox="0 0 12 12"><path d="M1 12L12 1M5 12l7-7M9 12l3-3" stroke="#999" stroke-width="1.500" /></svg></footer>
    </section>

    <svg class="cursor" viewBox="0 0 11 23"><path d="M5.500 1L1 6h3.500v11H1l4.500 5 4.500-5H6.500V6H10z" fill="#fff" stroke="#000" /></svg>
  </div>
</template>

<style>
body { background: #050505; }
</style>

<style scoped>
.defs { position: absolute; width: 0; height: 0; }
.desktop { position: relative; height: 100vh; overflow: hidden; background: #050505; font: 11px/16px "Open Sans", "Noto Sans", sans-serif; color: #000; }
.desktop button, .desktop input, .desktop select { font: inherit; color: inherit; margin: 0; box-sizing: border-box; border-radius: 0; }
i { font-style: normal; }
.window { position: absolute; box-sizing: border-box; background: #fff; }

/* stress test application */
.stress { height: 100%; display: flex; flex-direction: column; color: #e8e8e8; }
.stress-form { flex: 1; padding-top: 2px; }
.test-row { display: flex; align-items: center; height: 22px; margin-bottom: 10px; }
.test-name { width: 99px; white-space: nowrap; }
.info { width: 12px; height: 12px; margin-right: 29px; }
.combo { position: relative; width: 85px; height: 22px; margin-right: 5px; }
.combo select { width: 100%; height: 100%; padding: 0 3px; appearance: none; background: #050505; border: 1px solid #8a8a8a; border-radius: 2px; color: #e8e8e8; opacity: 1; }
.combo .arrow { position: absolute; right: 6px; top: 9px; width: 8px; height: 4px; color: #555; }
.off .combo select { border-color: #333; color: #555; }
.off .combo .arrow { color: #2a2a2a; }
.desktop .start { display: block; width: 68px; height: 22px; margin-top: 19px; padding: 0 0 0 3px; text-align: left; background: linear-gradient(#262626, #0c0c0c); border: 1px solid #555; border-left: 0; color: #e8e8e8; }
.verify { display: block; margin-top: 13px; color: #1466b4; text-decoration: none; }
h2 { margin: 35px 0 0; padding-bottom: 8px; width: 209px; font-size: 16px; line-height: 26px; font-weight: 400; border-bottom: 1px solid #333; text-indent: -6px; }
.stress p { margin: 7px 0 0; }
.stress p.inset { margin: 0 0 0 3px; }
.chart { position: relative; height: 170px; border-top: 3px solid #3c3c3c; background: #000; }
.chart svg { display: block; width: 696px; height: 170px; }
.chart polyline, .chart line { fill: none; vector-effect: non-scaling-stroke; }
.chart .more { position: absolute; left: 1678px; top: 26px; color: #1a7cc0; text-decoration: none; }

/* HWiNFO main window */
.hwinfo { left: 209px; top: 50px; width: 1560px; height: 806px; display: flex; flex-direction: column; border: 1px solid #555; }
.hw-title { display: flex; align-items: center; gap: 6px; height: 27px; padding-left: 7px; color: #999; }
.hw-title svg { width: 15px; height: 15px; }
.hw-menu { display: flex; gap: 15px; height: 22px; padding-left: 7px; line-height: 24px; color: #666; border-bottom: 1px solid #999; }
.hw-tools { display: flex; align-items: flex-start; height: 55px; border-bottom: 2px solid #777; padding: 0 0 0 2px; box-sizing: border-box; }
.tool { width: 32px; height: 32px; margin: 6px 19px; }
.tool.wide { margin: 6px 18px 6px 25px; }
.hw-tools .bar { width: 1px; height: 53px; background: #999; }
.bios { display: flex; flex-direction: column; align-items: center; gap: 6px; width: 71px; height: 53px; padding: 13px 0 0; border: 0; background: none; white-space: nowrap; }
.bios svg { width: 28px; height: 20px; flex: none; }
.hw-body { flex: 1; padding: 130px 0 0 31px; }
.hw-node { display: flex; align-items: center; gap: 4px; }
.hw-node svg { width: 28px; height: 12px; }
.hw-status { height: 18px; padding-left: 4px; line-height: 18px; background: #f0f0f0; border-top: 1px solid #ccc; }

/* graph windows */
.graph { left: 17px; width: 565px; box-shadow: 0 2px 16px rgba(0, 0, 0, .4); background: #f0f0f0; }
.ambient { top: 115px; height: 176px; }
.gputemp { top: 300px; height: 172px; }
.pl1 { top: 481px; height: 172px; }
.package { top: 679px; height: 172px; }
.graph header { display: flex; justify-content: space-between; height: 30px; padding: 7px 1px 0 8px; box-sizing: border-box; background: #fff; color: #999; }
.graph header button { width: 19px; height: 19px; padding: 0; border: 0; background: #e3e3e3; color: #fff; line-height: 16px; }
.graph-body { display: flex; align-items: flex-start; gap: 3px; }
.plot { width: 495px; flex: none; }
.side { align-self: stretch; display: flex; flex-direction: column; width: 58px; margin-bottom: -1px; font-family: "DejaVu Sans Condensed", "Open Sans", sans-serif; font-size: 10px; }
.side input { width: 58px; height: 17px; padding: 0 4px; border: 1px solid #7a7a7a; background: #fff; }
.side .now { margin: 4px 0 17px; background: #f0f0f0; }
.swatch { width: 10px; height: 11px; margin: auto 24px 0; border: 1px solid #aaa; box-sizing: border-box; }
.pair { display: flex; gap: 2px; height: 20px; margin-bottom: 11px; }
.pair button { width: 28px; height: 20px; padding: 0; border: 1px solid #adadad; background: #e1e1e1; white-space: nowrap; }

/* sensor list window */
.sensors { left: 696px; top: 0; bottom: 0; width: 982px; display: flex; flex-direction: column; border: solid #7c8088; border-width: 0 1px; box-shadow: 0 0 16px rgba(0, 0, 0, .5); font-family: "DejaVu Sans Condensed", "Open Sans", sans-serif; }
.sensor-area { flex: 1; min-height: 0; display: flex; overflow: hidden; border-bottom: 1px solid #828790; }
table { border-spacing: 0; table-layout: fixed; }
.sensors table { width: 962px; height: 0; }
.c-icon { width: 21px; }
.c-name { width: 242px; }
.c-val { width: 160px; }
.sensors th { height: 25px; padding: 2px 6px 0 0; box-sizing: border-box; text-align: right; font-weight: 400; border-right: 1px solid #e5e5e5; }
.sensors th.first { text-align: left; padding-left: 7px; }
.sensors td { height: 17px; padding: 2px 6px 0 0; box-sizing: border-box; text-align: right; line-height: 14px; white-space: nowrap; border-right: 1px solid #ececec; border-bottom: 1px solid #efefef; }
.sensors .name { text-align: left; padding-left: 2px; padding-right: 0; }
.sensors td.ico { padding: 1px 0 0 6px; border-right: 0; }
.sensors .ico svg { display: block; width: 14px; height: 15px; }
.sensors .band td { background: #efefef; }
.sensors .group td { background: #dcdcdc; }
.sensors .group .name { font-style: italic; }
.sensors td.rest, .sensors th.rest { border-right: 0; }
.sensors tr td.ico, .sensors tr td.rest { background: #fff; }

.scroll { display: flex; flex-direction: column; align-items: center; width: 17px; background: #f0f0f0; }
.scroll svg { width: 9px; height: 6px; margin: 6px 0 5px; flex: none; }
.scroll path { fill: none; stroke: #555; stroke-width: 2; }
.scroll .track { flex: 1; width: 15px; display: flex; flex-direction: column; }
.scroll .thumb { background: #cdcdcd; width: 15px; }
.sensors .scroll .track { justify-content: flex-end; padding-bottom: 118px; }
.sensors .scroll .thumb { height: 384px; }

.sensor-bar { display: flex; align-items: flex-start; height: 39px; padding: 7px 9px 0 0; box-sizing: border-box; overflow: hidden; background: #f0f0f0; }
.sensor-bar button { display: flex; align-items: flex-start; width: 42px; height: 40px; flex: none; padding: 0; border: 1px solid #adadad; background: #e1e1e1; }
.sensor-bar button svg { display: block; width: 40px; height: 32px; }
.sensor-bar .dim { margin: 0 0 0 2px; background: #cccccc; border-color: #bfbfbf; }
.fan { width: 24px; height: 24px; margin: 6px 59px 0 auto; }
.sensor-bar time { margin: 8px 4px 0 26px; line-height: 16px; }
.sensor-bar .g3 { margin-left: 3px; }
.sensor-bar .g4 { margin-left: 4px; }
.sensor-bar .g5 { margin-left: 5px; }

/* hardware monitor window */
.monitor { left: 1688px; right: 2px; top: 0; border: solid #333; border-width: 0 1px 1px 0; box-shadow: 0 0 16px rgba(0, 0, 0, .5); }
.mon-menu { display: flex; gap: 15px; height: 20px; padding-left: 7px; line-height: 20px; color: #6d6d6d; }
.mon-frame { display: flex; padding-bottom: 1px; border: solid #777; border-width: 2px 0 1px 1px; border-bottom-color: #ddd; }
.mon-frame table { flex: 1; min-width: 0; }
.m-name { width: 230px; }
.m-val { width: 87px; }
.mon-frame th { height: 19px; padding: 1px 0 0 7px; box-sizing: border-box; text-align: left; font: 13px/16px "Liberation Sans", sans-serif; background: #f0f0f0; border: solid #999; border-width: 0 1px 1px 0; }
.mon-frame th:last-child { border-right: 0; }
.mon-frame td { height: 18px; padding: 0; white-space: pre; line-height: 18px; }
.mon-frame .val { padding-left: 8px; }
.mon-frame .band .val { background: #efefef; }
.mon-frame .scroll { width: 16px; margin-top: 19px; }
.mon-frame .scroll .thumb { flex: 1; }
.mon-frame .scroll .track { padding-bottom: 50px; }
.node { display: flex; align-items: center; height: 18px; }
.slot { position: relative; flex: none; width: 19px; height: 18px; }
.slot svg { position: absolute; left: 5px; top: 5px; width: 9px; height: 9px; }
.up::before, .down::before { content: ""; position: absolute; left: 9px; top: 0; height: 9px; border-left: 1px dotted #808080; }
.down::before { height: 18px; }
.box::after, .arm::after { content: ""; position: absolute; left: 10px; top: 9px; width: 10px; border-top: 1px dotted #808080; }
.pic { flex: none; width: 16px; height: 16px; margin: 0 1px 0 2px; }
.label { flex: 1; padding-left: 3px; }
.band .label { background: #efefef; }
.mon-status { display: flex; align-items: center; height: 20px; padding-left: 2px; background: #f0f0f0; }
.mon-status span { flex: 1; }
.pane { width: 27px; height: 17px; margin-right: 4px; border: solid #999; border-width: 1px 0 0 1px; }
.num { width: 32px; text-align: center; }
.mon-status svg { width: 12px; height: 12px; margin: 6px 0 0 4px; }

.cursor { position: absolute; left: 33px; top: 103px; width: 11px; height: 23px; }
</style>
